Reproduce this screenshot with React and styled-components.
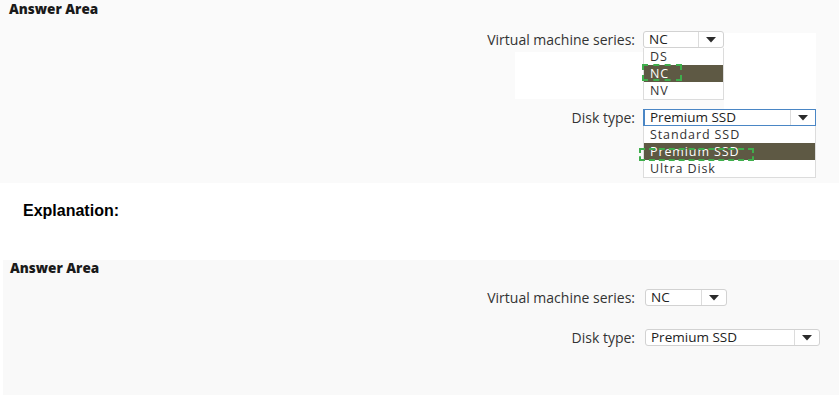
import React from 'react';
import styled, { createGlobalStyle } from 'styled-components';

const GlobalStyle = createGlobalStyle`
    html, body {
        margin: 0;
        padding: 0;
        background: #ffffff;
    }
    body {
        width: 839px;
        height: 414px;
        overflow: hidden;
        font-family: 'Open Sans', 'Noto Sans', sans-serif;
    }
`;

const Caret = () => (
    <svg width="10" height="6" viewBox="0 0 10 6">
        <path d="M0 0 L10 0 L5 5.5 Z" fill="#2b2b2b" />
    </svg>
);

const Dropdown = ({ value, width, focused, options, selected, mark }) => (
    <SelectWrap>
        <SelectBox $width={width} $focused={focused}>
            <SelectValue>{value}</SelectValue>
            <ArrowCell>
                <Caret />
            </ArrowCell>
        </SelectBox>
        {options && (
            <OptionList>
                {options.map(opt => (
                    <Option key={opt} $active={opt === selected}>
                        <OptionText>{opt}</OptionText>
                    </Option>
                ))}
                {mark && (
                    <Mark
                        style={{ left: mark.left, top: mark.top, width: mark.width, height: mark.height }}
                    />
                )}
            </OptionList>
        )}
    </SelectWrap>
);

class App extends React.Component {
    render() {
        return (
            <>
                <GlobalStyle />
                <Page>
                    <TopPanel>
                        <WhiteBlock $left={515} $top={52} $width={128} $height={47} />
                        <WhiteBlock $left={724} $top={33} $width={92} $height={76} />
                        <Title>Answer Area</Title>
                        <Row $top={13}>
                            <Label $width={635} $gap={8}>Virtual machine series:</Label>
                            <Dropdown
                                value="NC"
                                width={81}
                                options={['DS', 'NC', 'NV']}
                                selected="NC"
                                mark={{ left: -2, top: 16, width: 40, height: 17 }}
                            />
                        </Row>
                        <Row $top={59}>
                            <Label $width={635} $gap={8}>Disk type:</Label>
                            <Dropdown
                                value="Premium SSD"
                                width={173}
                                focused
                                options={['Standard SSD', 'Premium SSD', 'Ultra Disk']}
                                selected="Premium SSD"
                                mark={{ left: -5, top: 22, width: 115, height: 13 }}
                            />
                        </Row>
                    </TopPanel>

                    <Explanation>Explanation:</Explanation>

                    <BottomPanel>
                        <Title $left={7}>Answer Area</Title>
                        <Row $top={12}>
                            <Label $width={632} $gap={10}>Virtual machine series:</Label>
                            <Dropdown value="NC" width={82} />
                        </Row>
                        <Row $top={21}>
                            <Label $width={632} $gap={10}>Disk type:</Label>
                            <Dropdown value="Premium SSD" width={175} />
                        </Row>
                    </BottomPanel>
                </Page>
            </>
        );
    }
}

export default App;


const Page = styled.div`
    display: flex;
    flex-direction: column;
    width: 839px;
`

const TopPanel = styled.div`
    position: relative;
    height: 183px;
    background: #fafafa;
    padding-top: 2px;
    box-sizing: border-box;
`

const WhiteBlock = styled.div`
    position: absolute;
    left: ${p => p.$left}px;
    top: ${p => p.$top}px;
    width: ${p => p.$width}px;
    height: ${p => p.$height}px;
    background: #ffffff;
`

const BottomPanel = styled.div`
    position: relative;
    margin-left: 3px;
    height: 135px;
    background: #f9f9f9;
    padding-top: 1px;
    box-sizing: border-box;
`

const Title = styled.div`
    position: relative;
    margin-left: ${p => p.$left ?? 9}px;
    font-size: 13.5px;
    font-weight: 800;
    line-height: 15px;
    color: #1a1a1a;
`

const Explanation = styled.div`
    height: 77px;
    padding: 19px 0 0 23px;
    box-sizing: border-box;
    font-family: 'Liberation Sans', Arial, sans-serif;
    font-size: 16px;
    font-weight: bold;
    color: #000000;
`

const Row = styled.div`
    position: relative;
    display: flex;
    align-items: center;
    margin-top: ${p => p.$top}px;
`

const Label = styled.div`
    width: ${p => p.$width}px;
    padding-right: ${p => p.$gap}px;
    box-sizing: content-box;
    text-align: right;
    font-size: 14px;
    color: #333333;
    line-height: 19px;
`

const SelectWrap = styled.div`
    position: relative;
`

const SelectBox = styled.div`
    display: flex;
    align-items: stretch;
    width: ${p => p.$width}px;
    height: 17px;
    box-sizing: border-box;
    border: 1px solid ${p => (p.$focused ? '#4a86c5' : '#d2d2d2')};
    border-left-width: ${p => (p.$focused ? 2 : 1)}px;
    border-radius: ${p => (p.$focused ? 0 : 3)}px;
    background: #ffffff;
`

const SelectValue = styled.div`
    flex: 1;
    padding-left: 5px;
    font-size: 13.5px;
    line-height: 15px;
    color: #222222;
    white-space: nowrap;
`

const ArrowCell = styled.div`
    width: 24px;
    display: flex;
    align-items: center;
    justify-content: center;
    border-left: 1px solid #dcdcdc;
`

const OptionList = styled.div`
    position: absolute;
    left: 0;
    right: 0;
    top: 17px;
    background: #ffffff;
    border: 1px solid #dcdcdc;
    border-top: none;
`

const Option = styled.div`
    height: 17px;
    padding-left: 6px;
    display: flex;
    align-items: center;
    color: ${p => (p.$active ? '#ffffff' : '#333333')};
    background: ${p => (p.$active ? '#5e5944' : 'transparent')};
    white-space: nowrap;
`

const OptionText = styled.span`
    font-size: 12.5px;
    letter-spacing: 0.9px;
    line-height: 17px;
`

const Mark = styled.div`
    position: absolute;
    box-sizing: border-box;
    border: 2px dashed #3fae4c;
`
